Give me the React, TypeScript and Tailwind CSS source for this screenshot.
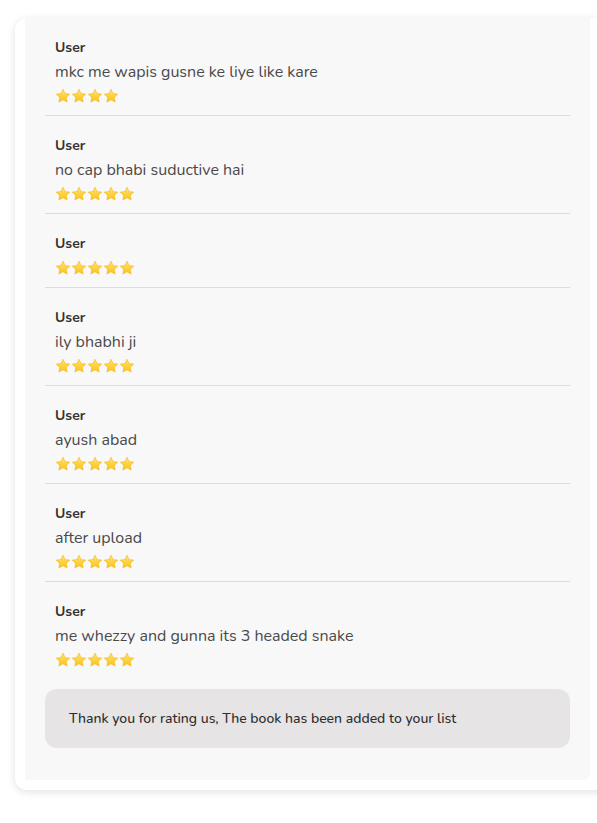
import React from "react";

const reviews: { text: string; stars: number }[] = [
  { text: "mkc me wapis gusne ke liye like kare", stars: 4 },
  { text: "no cap bhabi suductive hai", stars: 5 },
  { text: "", stars: 5 },
  { text: "ily bhabhi ji", stars: 5 },
  { text: "ayush abad", stars: 5 },
  { text: "after upload", stars: 5 },
  { text: "me whezzy and gunna its 3 headed snake", stars: 5 },
];

function Star() {
  return (
    <svg width="16" height="16" viewBox="0 0 24 24" className="block">
      <defs>
        <linearGradient id="sg" x1="0" y1="0" x2="0" y2="1">
          <stop offset="0" stopColor="#ffe46e" />
          <stop offset="1" stopColor="#fbc21c" />
        </linearGradient>
      </defs>
      <path
        d="M12 1.8l3.05 6.5 7.05.9-5.2 4.9 1.35 7-6.25-3.45-6.25 3.45 1.35-7-5.2-4.9 7.05-.9z"
        fill="url(#sg)"
        stroke="#f5ae00"
        strokeWidth="0.8"
        strokeLinejoin="round"
      />
    </svg>
  );
}

export default function App() {
  return (
    <div
      className="w-[597px] h-[823px] overflow-hidden bg-white pt-[18px] pl-[15px]"
      style={{ fontFamily: "Nunito, 'Noto Sans', Lato, sans-serif" }}
    >
      <div className="w-[600px] bg-white rounded-[12px] shadow-[0_2px_8px_rgba(0,0,0,0.12)] pl-[10px] pb-[10px]">
        <div className="w-[565px] bg-[#f8f8f8] rounded-br-[6px] px-[20px] pb-[32px]">
          {reviews.map((r, i) => (
            <div
              key={i}
              className={`pl-[10px] pt-[17px] pb-[7px] ${i < reviews.length - 1 ? "border-b border-[#dcdcdc]" : ""}`}
            >
              <div className="text-[14px] leading-[25px] font-bold text-[#333333]">User</div>
              {r.text && (
                <div className="text-[16px] leading-[24px] text-[#4a4a4a]">{r.text}</div>
              )}
              <div className="h-[24px] flex items-center gap-0">
                {Array.from({ length: r.stars }).map((_, k) => (
                  <Star key={k} />
                ))}
              </div>
            </div>
          ))}
          <div className="mt-[10px] h-[59px] rounded-[12px] bg-[#e6e4e5] flex items-center pl-[24px] text-[14px] font-medium text-[#2d2d2d]">
            Thank you for rating us, The book has been added to your list
          </div>
        </div>
      </div>
    </div>
  );
}
